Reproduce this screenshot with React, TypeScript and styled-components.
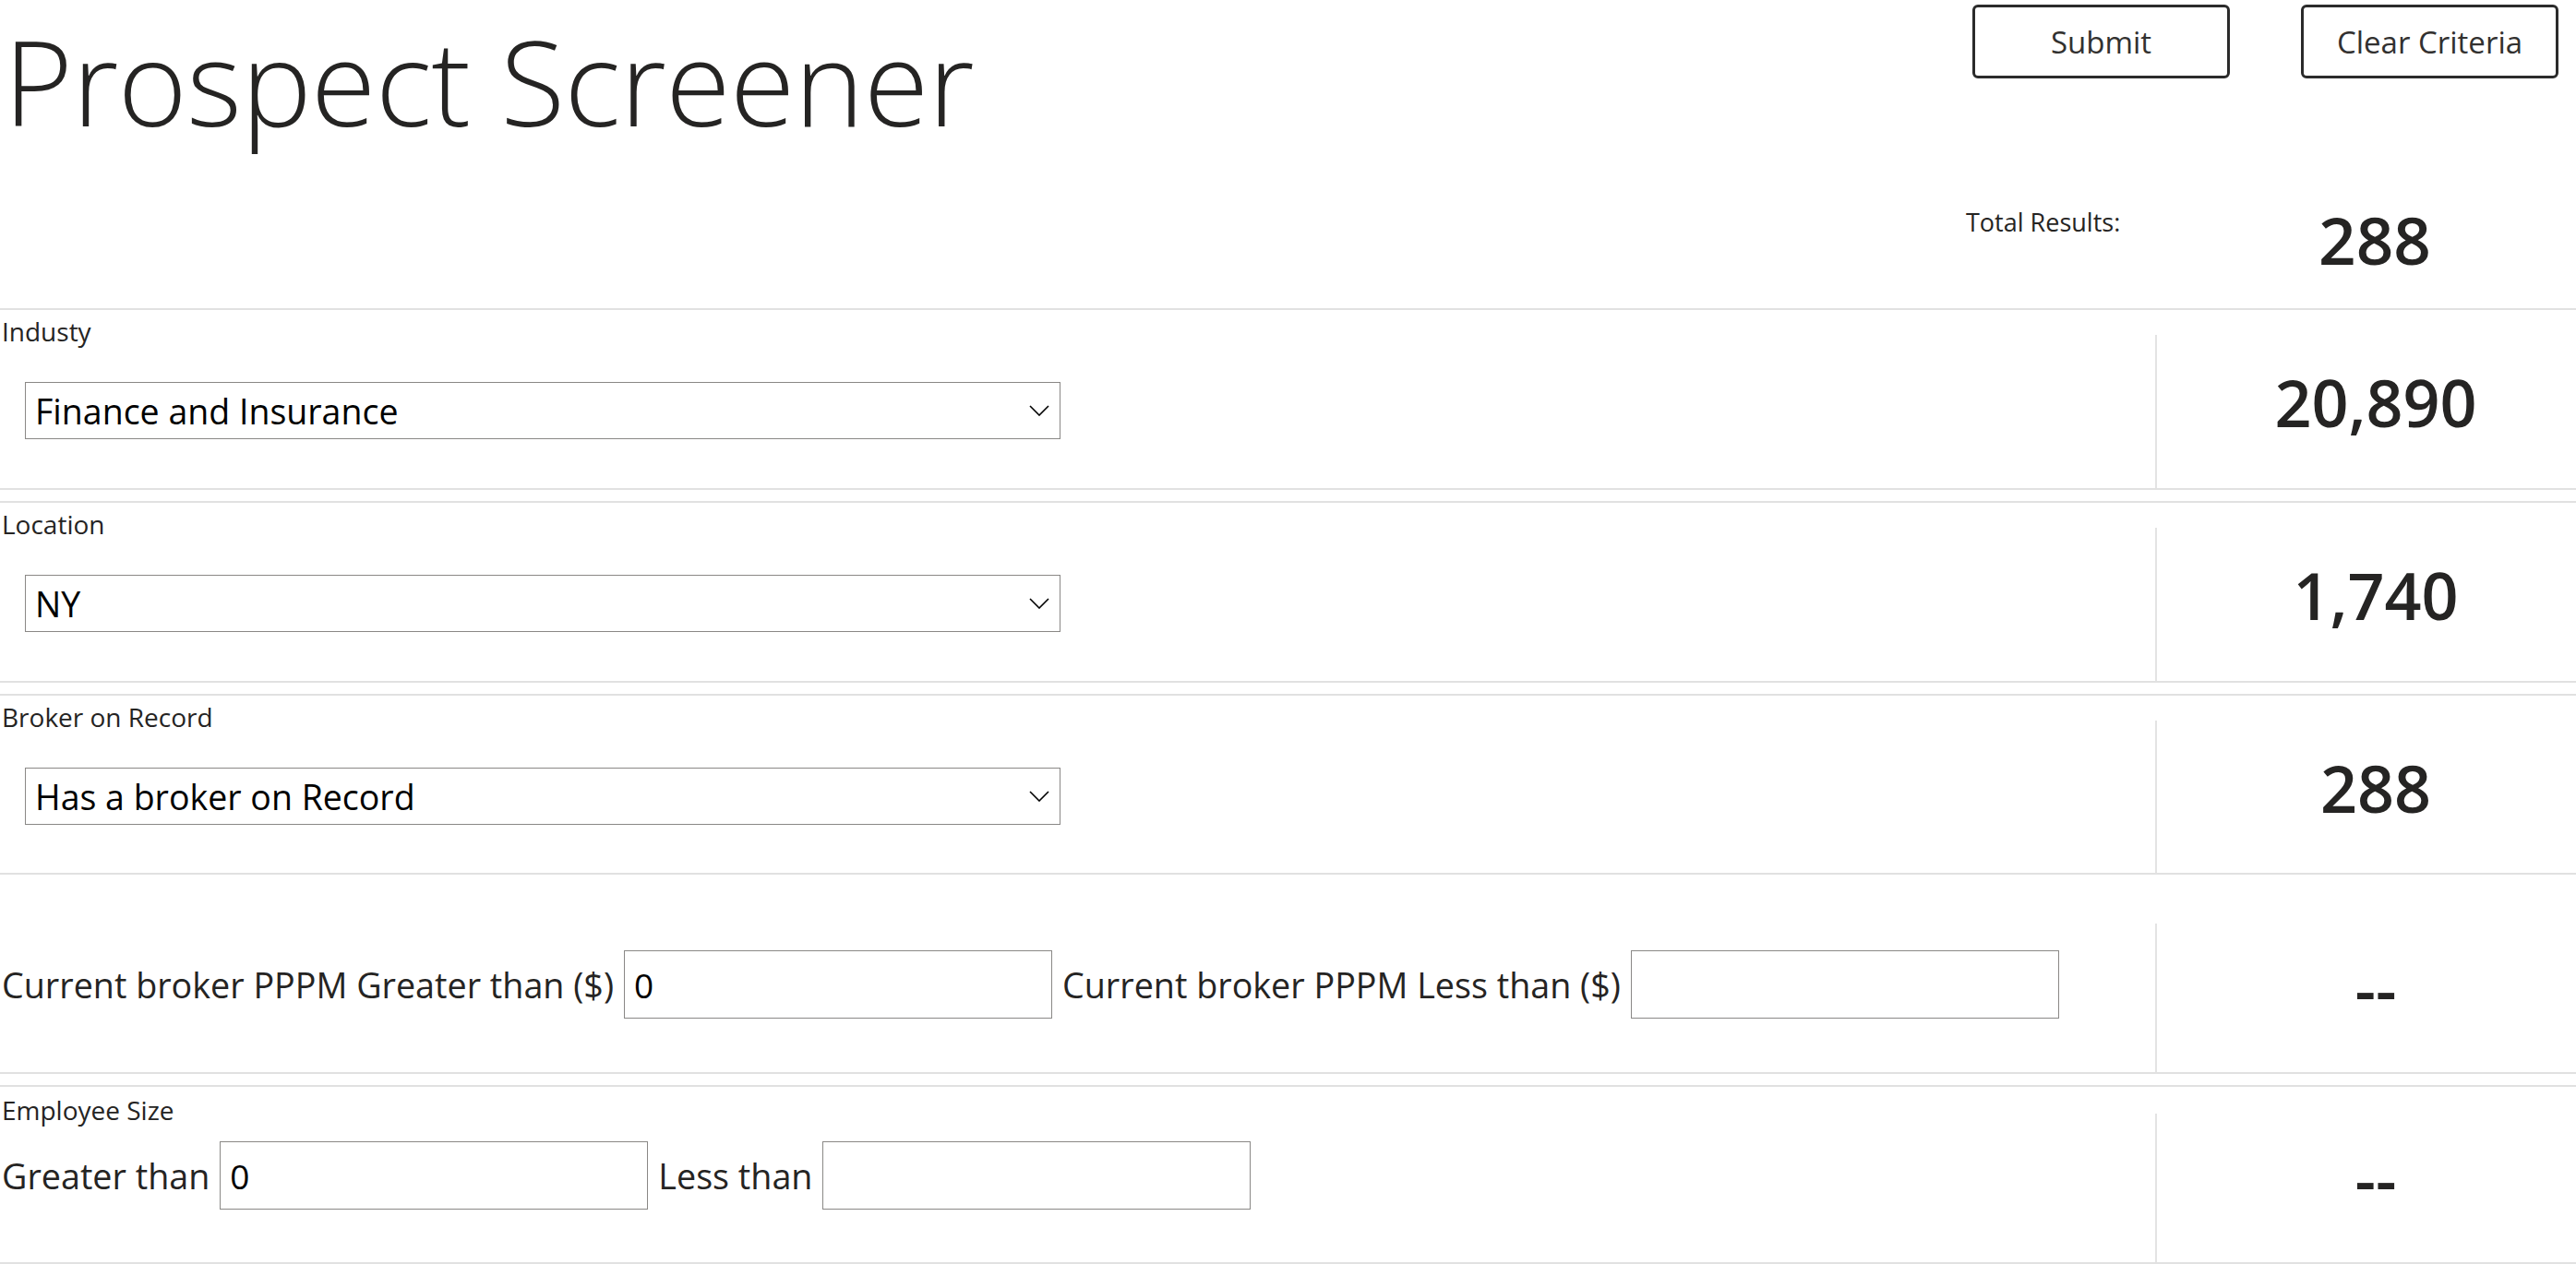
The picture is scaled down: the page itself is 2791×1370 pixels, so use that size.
import React from "react";
import styled, { createGlobalStyle } from "styled-components";

const GlobalStyle = createGlobalStyle`
  html, body {
    margin: 0;
    padding: 0;
    background: #fff;
  }
  body {
    font-family: "Open Sans", "Noto Sans", sans-serif;
    color: #252423;
  }
  * {
    box-sizing: border-box;
  }
`;

const Page = styled.div`
  width: 2791px;
  height: 1370px;
  overflow: hidden;
`;

const Header = styled.header`
  display: flex;
  justify-content: space-between;
  height: 334px;
`;

const Title = styled.h1`
  margin: 0 0 0 4px;
  padding-right: 8px;
  font-size: 128px;
  font-weight: 300;
  line-height: normal;
  letter-spacing: -0.5px;
  color: #252423;
  white-space: nowrap;
`;

const HeaderSide = styled.div`
  width: 661px;
  display: flex;
  flex-direction: column;
`;

const ButtonRow = styled.div`
  display: flex;
  justify-content: flex-end;
  gap: 77px;
  margin-top: 5px;
  padding-right: 19px;
`;

const Button = styled.button`
  width: 279px;
  height: 80px;
  padding: 0;
  border: 3px solid #2b2b2b;
  border-radius: 6px;
  background: #fff;
  font-family: inherit;
  font-size: 33px;
  color: #323130;
  cursor: pointer;
`;

const TotalsRow = styled.div`
  display: flex;
  align-items: flex-start;
  margin-top: 139px;
`;

const TotalLabel = styled.span`
  width: 205px;
  margin-top: 3px;
  font-size: 27px;
  line-height: 28px;
  white-space: nowrap;
`;

const BigNumber = styled.div`
  width: 456px;
  padding-left: 20px;
  text-align: center;
  font-size: 71px;
  font-weight: 600;
  line-height: 72px;
  color: #252423;
`;

const Row = styled.section<{ $height: number; $top?: boolean; $gap?: number }>`
  display: flex;
  height: ${p => p.$height + (p.$top ? 4 : 2)}px;
  margin-top: ${p => p.$gap ?? 0}px;
  border-top: ${p => (p.$top ? "2px solid #e1e1e1" : "none")};
  border-bottom: 2px solid #e1e1e1;
`;

const FieldArea = styled.div`
  flex: 1;
  min-width: 0;
  padding-left: 2px;
`;

const Label = styled.div<{ $offset: number }>`
  margin-top: ${p => p.$offset}px;
  font-size: 28px;
  line-height: 28px;
  color: #252423;
`;

const SelectBox = styled.div`
  display: flex;
  align-items: center;
  justify-content: space-between;
  width: 1122px;
  height: 62px;
  margin: 41px 0 0 25px;
  padding: 0 11px 0 10px;
  border: 1px solid #8a8886;
  background: #fff;
  font-size: 37.5px;
  color: #000;
  cursor: pointer;
`;

const FieldLine = styled.div<{ $offset: number }>`
  display: flex;
  align-items: center;
  gap: 11px;
  margin-top: ${p => p.$offset}px;
`;

const FieldText = styled.span`
  font-size: 37.7px;
  white-space: nowrap;
  color: #252423;
`;

const NumberInput = styled.input`
  width: 464px;
  height: 74px;
  padding: 0 0 0 10px;
  border: 1px solid #8a8886;
  font-family: inherit;
  font-size: 37px;
  color: #000;
  outline: none;
`;

const ResultCol = styled.div<{ $offset: number }>`
  flex-shrink: 0;
  width: 456px;
  margin-top: ${p => p.$offset}px;
  padding: 0 0 20px 20px;
  border-left: 2px solid #e3e3e3;
  display: flex;
  align-items: center;
  justify-content: center;
  font-size: 70px;
  font-weight: 600;
  line-height: 72px;
  color: #252423;
`;

const Chevron = () => (
  <svg width="22" height="12" viewBox="0 0 22 12">
    <polyline points="1,1 11,11 21,1" fill="none" stroke="#000" strokeWidth="1.6" />
  </svg>
);

const dropdowns = [
  { label: "Industy", value: "Finance and Insurance", count: "20,890" },
  { label: "Location", value: "NY", count: "1,740" },
  { label: "Broker on Record", value: "Has a broker on Record", count: "288" },
];

export default function App() {
  return (
    <Page>
      <GlobalStyle />
      <Header>
        <Title>Prospect Screener</Title>
        <HeaderSide>
          <ButtonRow>
            <Button>Submit</Button>
            <Button>Clear Criteria</Button>
          </ButtonRow>
          <TotalsRow>
            <TotalLabel>Total Results:</TotalLabel>
            <BigNumber>288</BigNumber>
          </TotalsRow>
        </HeaderSide>
      </Header>

      {dropdowns.map((d, i) => (
        <Row key={d.label} $height={i === 2 ? 192 : 193} $top $gap={i === 0 ? 0 : 12}>
          <FieldArea>
            <Label $offset={9}>{d.label}</Label>
            <SelectBox>
              <span>{d.value}</span>
              <Chevron />
            </SelectBox>
          </FieldArea>
          <ResultCol $offset={27}>{d.count}</ResultCol>
        </Row>
      ))}

      <Row $height={214}>
        <FieldArea>
          <FieldLine $offset={82}>
            <FieldText>Current broker PPPM Greater than ($)</FieldText>
            <NumberInput defaultValue="0" />
            <FieldText>Current broker PPPM Less than ($)</FieldText>
            <NumberInput defaultValue="" />
          </FieldLine>
        </FieldArea>
        <ResultCol $offset={53}>--</ResultCol>
      </Row>

      <Row $height={190} $top $gap={12}>
        <FieldArea>
          <Label $offset={11}>Employee Size</Label>
          <FieldLine $offset={20}>
            <FieldText>Greater than</FieldText>
            <NumberInput defaultValue="0" />
            <FieldText>Less than</FieldText>
            <NumberInput defaultValue="" />
          </FieldLine>
        </FieldArea>
        <ResultCol $offset={29}>--</ResultCol>
      </Row>
    </Page>
  );
}
